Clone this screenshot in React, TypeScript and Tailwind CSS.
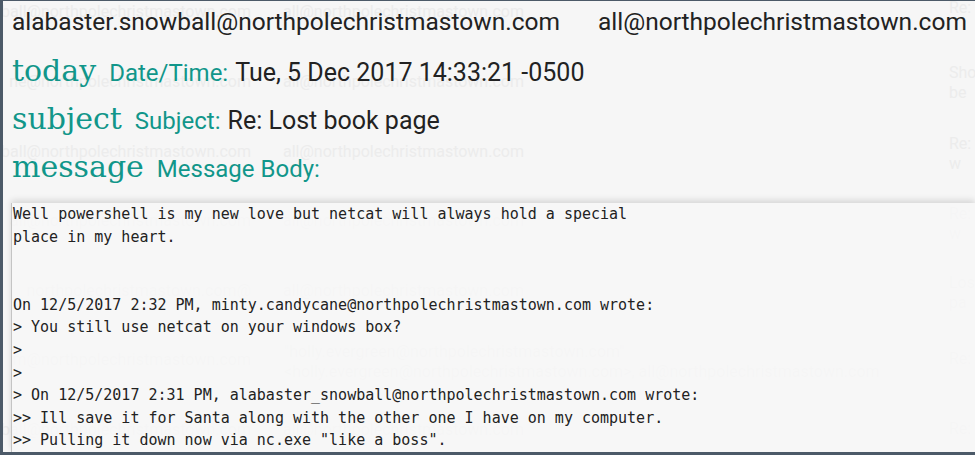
import React from 'react'

const teal = 'text-[#11968a]'

const ghostRows = [
  { top: 1, left: 'ster.snowball@northpolechristmastown.com', right: 'all@northpolechristmastown.com' },
  { top: 71, left: 'ne@northpolechristmastown.com', right: 'all@northpolechristmastown.com' },
  { top: 141, left: 'ball@northpolechristmastown.com', right: 'all@northpolechristmastown.com' },
  { top: 210, left: 'all@northpolechristmastown.com', right: 'all@northpolechristmastown.com' },
  { top: 280, left: '@northpolechristmastown.com', right: 'all@northpolechristmastown.com' },
  { top: 349, left: 'm@northpolechristmastown.com', right: '' },
  { top: 419, left: 'ball@northpolechristmastown.com', right: 'all@northpolechristmastown.com' },
]

const ghostSide = [
  { top: -3, text: ['Re:', ''] },
  { top: 62, text: ['Sho', 'be'] },
  { top: 133, text: ['Re:', 'w'] },
  { top: 203, text: ['Re:', 'w'] },
  { top: 272, text: ['Los', 'pa'] },
  { top: 348, text: ['Re:', ''] },
  { top: 418, text: ['Re:', ''] },
]

const body = `Well powershell is my new love but netcat will always hold a special
place in my heart.


On 12/5/2017 2:32 PM, minty.candycane@northpolechristmastown.com wrote:
> You still use netcat on your windows box?
>
>
> On 12/5/2017 2:31 PM, alabaster_snowball@northpolechristmastown.com wrote:
>> Ill save it for Santa along with the other one I have on my computer.
>> Pulling it down now via nc.exe "like a boss".`

function Row({ word, label, value }: { word: string; label: string; value?: string }) {
  return (
    <div className="flex h-[49px] items-baseline gap-[13px] pl-[9px] leading-[30px]">
      <span className={`font-['DejaVu_Serif',serif] text-[30px] ${teal}`}>{word}</span>
      <span className="flex items-baseline gap-[7px]">
        <span className={`text-[24px] ${teal}`}>{label}</span>
        {value && <span className="text-[25px] text-[#222]">{value}</span>}
      </span>
    </div>
  )
}

export default function App() {
  return (
    <div className="h-[455px] w-[975px] overflow-hidden bg-[#4c5a68] pt-px pb-[3px] pl-[3px] font-['Roboto',sans-serif]">
      <div className="relative h-full overflow-hidden bg-[#f6f6f6]">
        {/* list behind the translucent panel */}
        <div className="absolute inset-0 text-[16px] leading-[20px] text-[#ececec]">
          {ghostRows.map((r) => (
            <div key={r.top} className="absolute left-0 flex w-full" style={{ top: r.top }}>
              <span className="w-[248px] shrink-0 overflow-hidden whitespace-nowrap text-right [direction:rtl]">
                {r.left}
              </span>
              <span className="ml-[32px] whitespace-nowrap">{r.right}</span>
            </div>
          ))}
          <div className="absolute left-[281px] top-[341px] whitespace-nowrap">
            <div>"holly.evergreen@northpolechristmastown.com"</div>
            <div>&lt;holly.evergreen@northpolechristmastown.com&gt;, all@northpolechristmastown.com</div>
          </div>
          {ghostSide.map((s) => (
            <div key={s.top} className="absolute left-[946px]" style={{ top: s.top }}>
              <div>{s.text[0]}</div>
              <div>{s.text[1]}</div>
            </div>
          ))}
        </div>

        <div className="relative flex h-full flex-col pt-[6px]">
          <div className="flex h-[50px] gap-[38px] pl-[9px] text-[24.5px] leading-[30px] text-[#222]">
            <span>alabaster.snowball@northpolechristmastown.com</span>
            <span>all@northpolechristmastown.com</span>
          </div>
          <Row word="today" label="Date/Time:" value="Tue, 5 Dec 2017 14:33:21 -0500" />
          <Row word="subject" label="Subject:" value="Re: Lost book page" />
          <Row word="message" label="Message Body:" />
          <div className="ml-[8px] mt-[3px] flex-1 border-l border-[#c4c4c4] bg-[#f7f7f7]/80 shadow-[0_-3px_6px_rgba(0,0,0,0.12)]">
            <pre className="pl-px font-['DejaVu_Sans_Mono',monospace] text-[15px] leading-[22.6px] text-[#222]">
              {body}
            </pre>
          </div>
        </div>
      </div>
    </div>
  )
}
